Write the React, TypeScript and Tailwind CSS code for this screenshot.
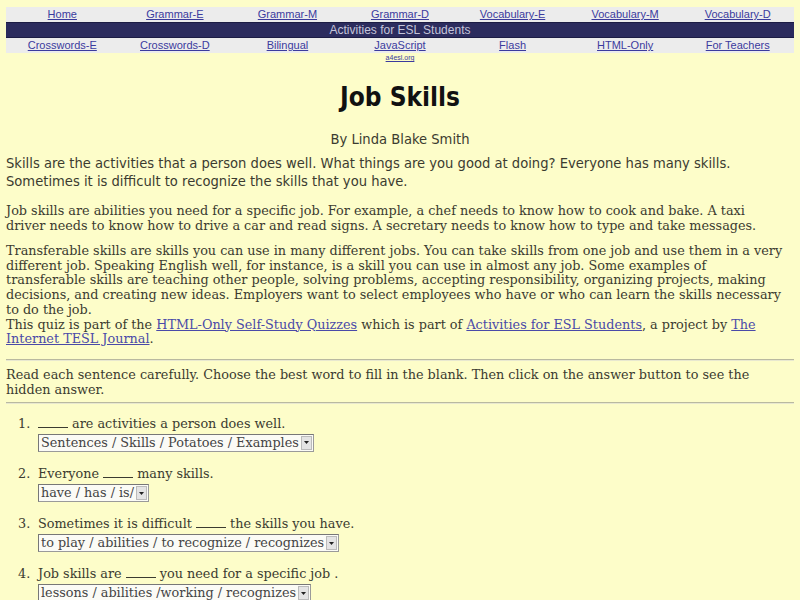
const topLinks = ['Home', 'Grammar-E', 'Grammar-M', 'Grammar-D', 'Vocabulary-E', 'Vocabulary-M', 'Vocabulary-D'];
const bottomLinks = ['Crosswords-E', 'Crosswords-D', 'Bilingual', 'JavaScript', 'Flash', 'HTML-Only', 'For Teachers'];

const questions = [
  { n: 1, before: '', after: ' are activities a person does well.', choices: 'Sentences / Skills / Potatoes / Examples' },
  { n: 2, before: 'Everyone ', after: ' many skills.', choices: 'have / has / is/' },
  { n: 3, before: 'Sometimes it is difficult ', after: ' the skills you have.', choices: 'to play / abilities / to recognize / recognizes' },
  { n: 4, before: 'Job skills are ', after: ' you need for a specific job .', choices: 'lessons / abilities /working / recognizes' },
];

function NavLink({ label }: { label: string }) {
  return <a className="text-[#3b3b9e] underline underline-offset-1">{label}</a>;
}

function Dropdown({ text }: { text: string }) {
  return (
    <div className="inline-flex items-stretch h-[18px] border border-[#9a9a9a] border-t-[#777] border-l-[#777] bg-[#fbfbf6]">
      <span className="px-[2px] leading-[16px] text-[#444]">{text}</span>
      <span className="w-[11px] my-[1px] mr-[1px] bg-[#e4e4e4] border border-[#bbb] flex items-center justify-center">
        <svg width="5" height="3" viewBox="0 0 5 3">
          <path d="M0 0h5L2.5 3z" fill="#222" />
        </svg>
      </span>
    </div>
  );
}

export default function App() {
  return (
    <div className="min-h-[600px] bg-[#fdfdc9] text-[#3b3b30] px-[6px] pt-[7px] font-['DejaVu_Serif',serif] text-[12.8px]">
      {/* site navigation */}
      <div className="font-['Liberation_Sans',Arial,sans-serif] text-[11px]">
        <div className="grid grid-cols-7 bg-[#ececec] h-[15px] leading-[15px] text-center">
          {topLinks.map((l) => (
            <div key={l}>
              <NavLink label={l} />
            </div>
          ))}
        </div>
        <div className="bg-[#2c2c5e] h-[16px] leading-[14px] text-center text-[#c4c4da] text-[12px] border-y border-[#1c1c44]">
          Activities for ESL Students
        </div>
        <div className="grid grid-cols-7 bg-[#ececec] h-[15px] leading-[15px] text-center">
          {bottomLinks.map((l) => (
            <div key={l}>
              <NavLink label={l} />
            </div>
          ))}
        </div>
        <div className="grid grid-cols-7 text-center leading-[9px] text-[7px]">
          <div className="col-start-4">
            <NavLink label="a4esl.org" />
          </div>
        </div>
      </div>

      <h1 className="mt-[20px] text-center font-['DejaVu_Sans_Condensed','DejaVu_Sans',sans-serif] font-bold text-[26px] leading-[30px] text-[#111]">
        Job Skills
      </h1>
      <div className="font-['DejaVu_Sans_Condensed','DejaVu_Sans',sans-serif] text-[14.6px] leading-[18px]">
        <p className="mt-[18px] text-center">By Linda Blake Smith</p>
        <p className="mt-[6px]">
          Skills are the activities that a person does well. What things are you good at doing? Everyone has many skills.
          <br />
          Sometimes it is difficult to recognize the skills that you have.
        </p>
      </div>

      <p className="mt-[14px] leading-[14.5px]">
        Job skills are abilities you need for a specific job. For example, a chef needs to know how to cook and bake. A taxi
        <br />
        driver needs to know how to drive a car and read signs. A secretary needs to know how to type and take messages.
      </p>
      <p className="mt-[11px] leading-[14.7px]">
        Transferable skills are skills you can use in many different jobs. You can take skills from one job and use them in a very
        <br />
        different job. Speaking English well, for instance, is a skill you can use in almost any job. Some examples of
        <br />
        transferable skills are teaching other people, solving problems, accepting responsibility, organizing projects, making
        <br />
        decisions, and creating new ideas. Employers want to select employees who have or who can learn the skills necessary
        <br />
        to do the job.
        <br />
        This quiz is part of the <a className="text-[#4a4aa8] underline">HTML-Only Self-Study Quizzes</a> which is part of{' '}
        <a className="text-[#4a4aa8] underline">Activities for ESL Students</a>, a project by{' '}
        <a className="text-[#4a4aa8] underline">The</a>
        <br />
        <a className="text-[#4a4aa8] underline">Internet TESL Journal</a>.
      </p>

      <hr className="mt-[12px] border-0 border-t border-b border-t-[#b9b9a0] border-b-[#e8e8d0] h-[2px]" />
      <p className="mt-[6px] leading-[15px]">
        Read each sentence carefully. Choose the best word to fill in the blank. Then click on the answer button to see the
        <br />
        hidden answer.
      </p>
      <hr className="mt-[5px] border-0 border-t border-b border-t-[#b9b9a0] border-b-[#e8e8d0] h-[2px]" />

      <ol className="mt-[12px] pl-[32px]">
        {questions.map((q) => (
          <li key={q.n} className="flex mb-[14px] -ml-[20px]">
            <span className="w-[20px] text-right pr-[8px] leading-[16px]">{q.n}.</span>
            <div>
              <div className="leading-[16px]">
                {q.before}
                <span className="inline-block w-[30px] border-b border-[#3b3b30] h-[11px] align-baseline" />
                {q.after}
              </div>
              <div className="mt-[1px]">
                <Dropdown text={q.choices} />
              </div>
            </div>
          </li>
        ))}
      </ol>
    </div>
  );
}
